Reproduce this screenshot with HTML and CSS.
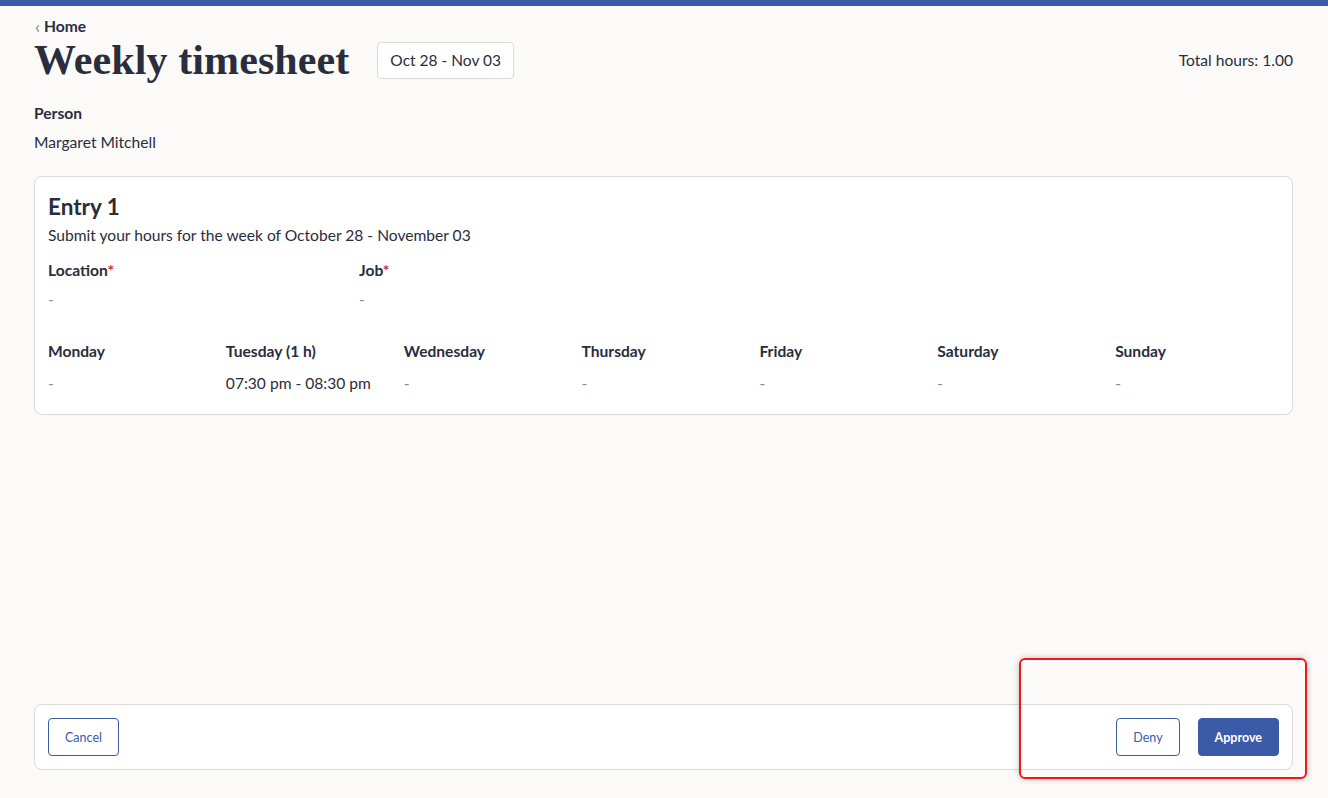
FILE: index.html
```html
<!DOCTYPE html>
<html lang="en">
<head>
  <meta charset="UTF-8" />
  <title>Weekly timesheet</title>
  <meta name="viewport" content="width=device-width, initial-scale=1.0" />
  <link rel="stylesheet" href="styles.css">
</head>
<body>
  <div class="top-bar"></div>
  <main class="page">
    <a class="back" href="#"><span class="chev">&lsaquo;</span>Home</a>
    <header class="head">
      <h1>Weekly timesheet</h1>
      <span class="week-pill">Oct 28 - Nov 03</span>
      <span class="total">Total hours: 1.00</span>
    </header>

    <section class="person">
      <div class="label">Person</div>
      <div class="value">Margaret Mitchell</div>
    </section>

    <section class="card entry">
      <h2>Entry 1</h2>
      <p class="sub">Submit your hours for the week of October 28 - November 03</p>
      <div class="meta">
        <div>
          <div class="label">Location<span class="req">*</span></div>
          <div class="value muted">-</div>
        </div>
        <div>
          <div class="label">Job<span class="req">*</span></div>
          <div class="value muted">-</div>
        </div>
      </div>
      <div class="days">
        <div><div class="label">Monday</div><div class="value muted">-</div></div>
        <div><div class="label">Tuesday (1 h)</div><div class="value">07:30 pm - 08:30 pm</div></div>
        <div><div class="label">Wednesday</div><div class="value muted">-</div></div>
        <div><div class="label">Thursday</div><div class="value muted">-</div></div>
        <div><div class="label">Friday</div><div class="value muted">-</div></div>
        <div><div class="label">Saturday</div><div class="value muted">-</div></div>
        <div><div class="label">Sunday</div><div class="value muted">-</div></div>
      </div>
    </section>

    <footer class="card actions">
      <button class="btn outline">Cancel</button>
      <span class="spacer"></span>
      <button class="btn outline">Deny</button>
      <button class="btn solid">Approve</button>
    </footer>
  </main>
  <div class="highlight"></div>
</body>
</html>
```

FILE: styles.css
```css
html, body { margin: 0; padding: 0; }
body { font-family: Lato, 'Noto Sans', sans-serif; background: #fbfaf8; color: #2a2d3c; font-size: 15.6px; }
.top-bar { height: 6px; background: #3b5aa8; }
.page { display: flex; flex-direction: column; min-height: calc(100vh - 6px); box-sizing: border-box; padding: 11px 35px 28px 34px; }

.back { color: #2a2d3c; text-decoration: none; font-weight: bold; font-size: 15.6px; line-height: 18px; display: flex; align-items: center; }
.chev { color: #888; font-weight: normal; font-size: 18px; margin: 0 4px 0 1px; line-height: 16px; }

.head { display: flex; align-items: center; margin-top: 3px; }
h1 { font-family: 'Liberation Serif', serif; font-size: 42px; font-weight: bold; margin: 0; line-height: 44px; letter-spacing: 0.1px; }
.week-pill { margin-left: 28px; border: 1px solid #dcd9d6; border-radius: 4px; background: #fff; padding: 0 12px; height: 35px; line-height: 35px; font-size: 15.5px; }
.total { margin-left: auto; font-size: 15.6px; }

.label { font-weight: bold; font-size: 15.6px; line-height: 18px; }
.value { font-size: 15.6px; line-height: 18px; margin-top: 11px; }
.muted { color: #8a8a8a; }
.req { color: #e02424; }

.person { margin-top: 22px; }

.card { background: #fff; border: 1px solid #dcd9d6; border-radius: 8px; }
.entry { margin-top: 25px; padding: 17px 14px 22px 13px; }
h2 { margin: 0; font-size: 22.5px; line-height: 26px; }
.sub { margin: 6px 0 0; line-height: 18px; }
.meta { display: grid; grid-template-columns: 311px 311px; margin-top: 17px; }
.days { display: grid; grid-template-columns: repeat(7, 1fr); column-gap: 15px; margin-top: 34px; }
.days .value { margin-top: 14px; }

.actions { margin-top: auto; display: flex; align-items: center; gap: 18px; padding: 13px 13px; }
.spacer { flex: 1; }
.btn { font-family: inherit; font-size: 12.5px; height: 38px; border-radius: 4px; padding: 0 16px; cursor: pointer; }
.outline { background: #fff; color: #3b5aa8; border: 1px solid #3b5aa8; }
.solid { background: #3b5aa8; color: #fff; border: 1px solid #3b5aa8; font-weight: bold; }

.highlight { position: absolute; left: 1019px; top: 658px; width: 284px; height: 117px; border: 2px solid #f01818; border-radius: 6px; box-shadow: 0 0 6px rgba(0,0,0,0.25); pointer-events: none; }
```
